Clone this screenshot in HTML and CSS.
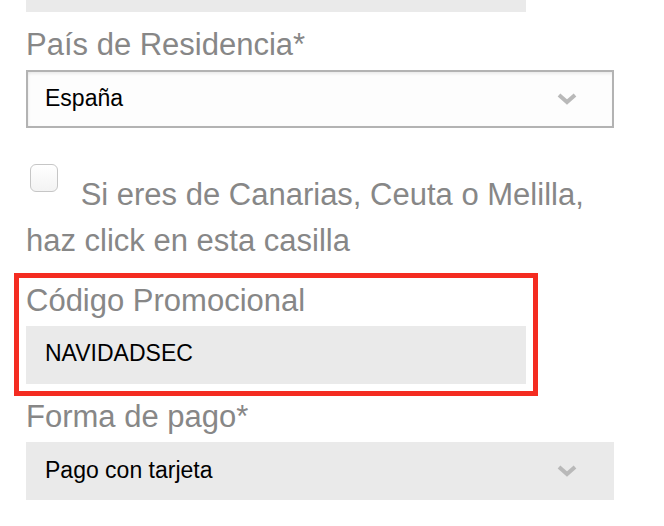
FILE: index.html
```
<!DOCTYPE html>
<html lang="es">
<head>
    <meta charset="UTF-8">
    <meta name="viewport" content="width=device-width, initial-scale=1.0">
    <title>Datos de facturación</title>
    <link rel="stylesheet" href="styles.css">
</head>
<body>
    <form class="checkout-form">
        <div class="prev-field"></div>

        <label class="field-label" for="pais">País de Residencia*</label>
        <div class="select-wrap">
            <select id="pais" class="field-select bordered">
                <option>España</option>
            </select>
            <svg class="chevron" viewBox="0 0 22 13" width="22" height="13">
                <polyline points="3,3 11,10 19,3" />
            </svg>
        </div>

        <p class="check-line">
            <input type="checkbox" id="canarias" class="check-box">
            <label for="canarias">Si eres de Canarias, Ceuta o Melilla, haz click en esta casilla</label>
        </p>

        <div class="promo-box">
            <label class="field-label" for="promo">Código Promocional</label>
            <input type="text" id="promo" class="field-input" value="NAVIDADSEC">
        </div>

        <label class="field-label after-promo" for="pago">Forma de pago*</label>
        <div class="select-wrap">
            <select id="pago" class="field-select">
                <option>Pago con tarjeta</option>
            </select>
            <svg class="chevron" viewBox="0 0 22 13" width="22" height="13">
                <polyline points="3,3 11,10 19,3" />
            </svg>
        </div>
    </form>
</body>
</html>
```

FILE: styles.css
```
body {
    margin: 0;
    font-family: 'Liberation Sans', Arial, sans-serif;
    background-color: #fff;
}

.checkout-form {
    padding-left: 26px;
}

.prev-field {
    width: 500px;
    height: 12px;
    background-color: #eaeaea;
}

.field-label {
    display: block;
    margin: 16px 0 8px;
    font-size: 31px;
    line-height: 34px;
    color: #878787;
}

.select-wrap {
    position: relative;
    width: 588px;
}

.field-select {
    -webkit-appearance: none;
    appearance: none;
    box-sizing: border-box;
    display: block;
    width: 100%;
    height: 58px;
    margin: 0;
    padding: 0 60px 3px 17px;
    border: 2px solid #eaeaea;
    border-radius: 0;
    background-color: #eaeaea;
    font-family: inherit;
    font-size: 23px;
    color: #000;
    outline: none;
}

.field-select.bordered {
    border-color: #b3b3b3;
    background-color: #fdfdfd;
    box-shadow: inset 0 3px 3px -1px rgba(0, 0, 0, 0.07), inset 2px 0 3px -1px rgba(0, 0, 0, 0.05);
}

.chevron {
    position: absolute;
    top: 50%;
    right: 36px;
    margin-top: -7px;
    fill: none;
    stroke: #b9b9b9;
    stroke-width: 4;
    filter: blur(0.4px);
}

.check-line {
    width: 590px;
    margin: 36px 0 0;
    font-size: 31px;
    line-height: 46px;
    color: #878787;
}

.check-box {
    -webkit-appearance: none;
    appearance: none;
    display: inline-block;
    box-sizing: border-box;
    width: 28px;
    height: 28px;
    margin: 0 14px 13px 4px;
    vertical-align: baseline;
    border: 1px solid #c6c6c6;
    border-radius: 6px;
    background: linear-gradient(#ffffff, #f3f3f3);
}

.promo-box {
    width: 500px;
    margin: 9px 0 0 -12px;
    padding: 0 7px 7px;
    border: 5px solid #f42c21;
}

.promo-box .field-label {
    margin-top: 6px;
}

.field-input {
    box-sizing: border-box;
    display: block;
    width: 500px;
    height: 58px;
    margin: 0;
    padding: 0 17px 3px;
    border: 2px solid #eaeaea;
    border-radius: 0;
    background-color: #eaeaea;
    font-family: inherit;
    font-size: 23px;
    color: #000;
    outline: none;
}

.field-label.after-promo {
    margin-top: 4px;
}
```
